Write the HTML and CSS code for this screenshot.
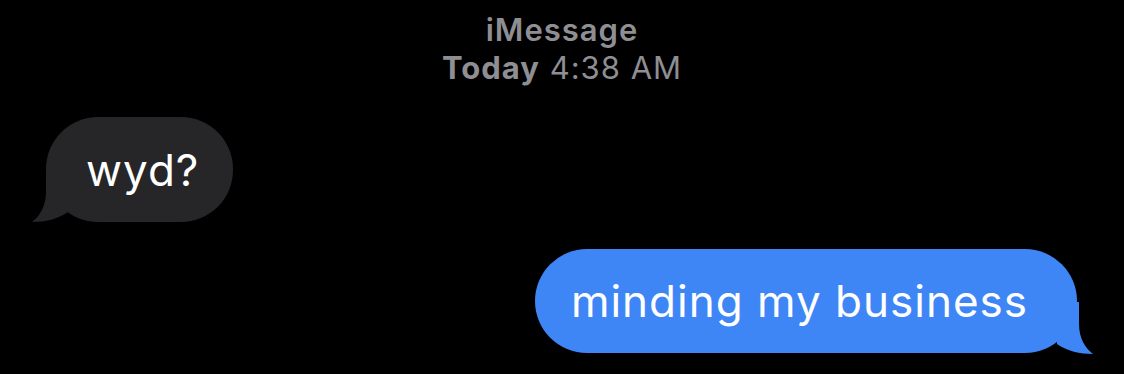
FILE: index.html
```html
<!DOCTYPE html>
<html>
<head>
<meta charset="utf-8">
<link rel="stylesheet" href="styles.css">
</head>
<body>
<div class="thread">
  <div class="meta">
    <div class="service">iMessage</div>
    <div class="time"><b>Today</b> 4:38 AM</div>
  </div>
  <div class="row row-in">
    <div class="bubble in">wyd?<svg class="tail" width="36" height="52" viewBox="0 0 36 52"><path d="M14,0 L14,22 C14,36 8,46 0,52 C13,52 26,49 36,42 L36,0 Z"/></svg></div>
  </div>
  <div class="row row-out">
    <div class="bubble out">minding my business<svg class="tail" width="36" height="52" viewBox="0 0 36 52"><path d="M14,0 L14,22 C14,36 8,46 0,52 C13,52 26,49 36,42 L36,0 Z"/></svg></div>
  </div>
</div>
</body>
</html>
```
FILE: styles.css
```css
html, body {
  margin: 0;
  padding: 0;
  background: #000;
}
body {
  width: 1124px;
  height: 374px;
  overflow: hidden;
  font-family: Inter, "Liberation Sans", sans-serif;
}
.thread {
  display: flex;
  flex-direction: column;
}
.meta {
  display: flex;
  flex-direction: column;
  align-items: center;
  color: #8e8e93;
  font-size: 31px;
  letter-spacing: 1px;
  line-height: 38px;
  padding-top: 11px;
}
.service {
  font-weight: 600;
}
.time b {
  font-weight: 700;
}
.row {
  display: flex;
}
.row-in {
  padding-left: 46px;
  margin-top: 30px;
}
.row-out {
  justify-content: flex-end;
  padding-right: 47px;
  margin-top: 27px;
}
.bubble {
  position: relative;
  height: 105px;
  box-sizing: border-box;
  display: flex;
  align-items: center;
  border-radius: 52px;
  color: #fff;
  font-size: 44px;
  letter-spacing: 1px;
  white-space: nowrap;
}
.in {
  background: #262628;
  padding: 0 34px 0 40px;
}
.out {
  background: #3e86f5;
  height: 104px;
  padding: 0 49px 0 36px;
}
.tail {
  position: absolute;
  bottom: 0;
}
.in .tail {
  left: -14px;
  fill: #262628;
}
.out .tail {
  right: -16px;
  bottom: -1px;
  fill: #3e86f5;
  transform: scaleX(-1);
}
```
